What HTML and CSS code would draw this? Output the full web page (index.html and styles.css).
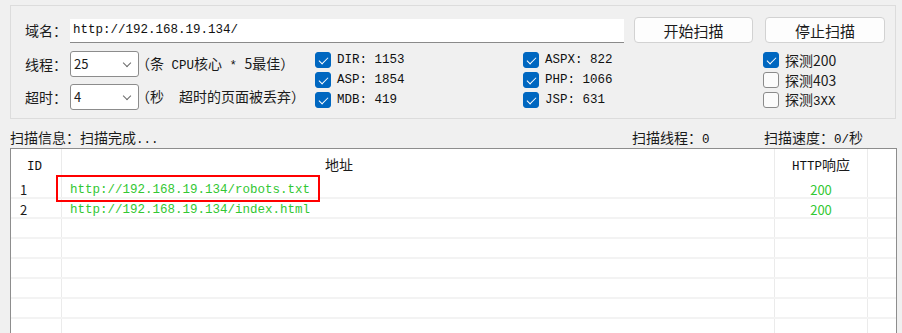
FILE: index.html
```html
<!DOCTYPE html>
<html lang="zh-CN">
<head>
    <meta charset="UTF-8">
    <title>扫描</title>
    <link rel="stylesheet" href="styles.css">
</head>
<body>
    <div class="group">
        <div class="url-row">
            <span class="label">域名：</span>
            <div class="url-input mono">http://192.168.19.134/</div>
            <button class="btn btn-start">开始扫描</button>
            <button class="btn btn-stop">停止扫描</button>
        </div>
        <div class="opts">
            <div class="settings">
                <div class="setting">
                    <span class="label">线程：</span>
                    <div class="select">25<i class="chev"></i></div>
                    <span class="hint">（条<span class="mono"> CPU</span>核心<span class="mono"> * </span>5最佳）</span>
                </div>
                <div class="setting">
                    <span class="label">超时：</span>
                    <div class="select">4<i class="chev"></i></div>
                    <span class="hint">（秒<span class="mono">  </span>超时的页面被丢弃）</span>
                </div>
            </div>
            <div class="checks col1">
                <div class="check"><i class="box on"></i><span class="mono">DIR: 1153</span></div>
                <div class="check"><i class="box on"></i><span class="mono">ASP: 1854</span></div>
                <div class="check"><i class="box on"></i><span class="mono">MDB: 419</span></div>
            </div>
            <div class="checks col2">
                <div class="check"><i class="box on"></i><span class="mono">ASPX: 822</span></div>
                <div class="check"><i class="box on"></i><span class="mono">PHP: 1066</span></div>
                <div class="check"><i class="box on"></i><span class="mono">JSP: 631</span></div>
            </div>
            <div class="checks col3">
                <div class="check"><i class="box on"></i><span>探测200</span></div>
                <div class="check"><i class="box"></i><span>探测403</span></div>
                <div class="check"><i class="box"></i><span>探测<span class="mono">3XX</span></span></div>
            </div>
        </div>
    </div>

    <div class="status">
        <span class="status-info">扫描信息：扫描完成<span class="mono">...</span></span>
        <span class="status-threads">扫描线程：<span class="mono">0</span></span>
        <span class="status-speed">扫描速度：<span class="mono">0/</span>秒</span>
    </div>

    <div class="list">
        <div class="row head">
            <div class="cell c-id"><span class="mono">ID</span></div>
            <div class="cell c-url"><span class="head-url">地址</span></div>
            <div class="cell c-code"><span class="mono">HTTP</span>响应</div>
            <div class="cell c-fill"></div>
        </div>
        <div class="row">
            <div class="cell c-id">1</div>
            <div class="cell c-url mono ok">http://192.168.19.134/robots.txt</div>
            <div class="cell c-code ok">200</div>
            <div class="cell c-fill"></div>
        </div>
        <div class="row">
            <div class="cell c-id">2</div>
            <div class="cell c-url mono ok">http://192.168.19.134/index.html</div>
            <div class="cell c-code ok">200</div>
            <div class="cell c-fill"></div>
        </div>
        <div class="row"><div class="cell c-id"></div><div class="cell c-url"></div><div class="cell c-code"></div><div class="cell c-fill"></div></div>
        <div class="row"><div class="cell c-id"></div><div class="cell c-url"></div><div class="cell c-code"></div><div class="cell c-fill"></div></div>
        <div class="row"><div class="cell c-id"></div><div class="cell c-url"></div><div class="cell c-code"></div><div class="cell c-fill"></div></div>
        <div class="row"><div class="cell c-id"></div><div class="cell c-url"></div><div class="cell c-code"></div><div class="cell c-fill"></div></div>
        <div class="row"><div class="cell c-id"></div><div class="cell c-url"></div><div class="cell c-code"></div><div class="cell c-fill"></div></div>
        <div class="row"><div class="cell c-id"></div><div class="cell c-url"></div><div class="cell c-code"></div><div class="cell c-fill"></div></div>
        <!-- 标注框 -->
        <div class="mark"></div>
    </div>
</body>
</html>
```

FILE: styles.css
```css
*{
    margin:0;
    padding:0;
    box-sizing:border-box;
}
body{
    height:333px;
    overflow:hidden;
    background:#f0f0f0;
    color:#1b1b1b;
    font-family:"Noto Sans CJK SC", "Noto Sans", sans-serif;
    font-size:14px;
    line-height:18px;
}
.mono{
    font-family:"Liberation Mono", "Noto Sans CJK SC", monospace;
    font-size:12.5px;
    color:#111;
    white-space:pre;
}
.group{
    margin:5px 0 0 10px;
    width:886px;
    height:114px;
    border:1px solid #dcdcdc;
    padding:11px 0 0 14px;
}
.url-row{
    display:flex;
    align-items:flex-end;
    height:26px;
}
.label{
    display:inline-block;
    width:45px;
    align-self:center;
}
.url-input{
    width:554px;
    height:24px;
    line-height:22px;
    padding-left:3px;
    background:#fff;
    border-bottom:1px solid #8a8a8a;
}
.btn{
    height:26px;
    font-family:"Noto Sans CJK SC", sans-serif;
    font-size:15px;
    color:#1b1b1b;
    background:#fdfdfd;
    border:1px solid #d2d2d2;
    border-radius:4px;
}
.btn-start{
    margin-left:10px;
    width:119px;
}
.btn-stop{
    margin-left:12px;
    width:120px;
}
.opts{
    display:flex;
    margin-top:8px;
}
.settings{
    width:290px;
    display:flex;
    flex-direction:column;
    gap:7px;
}
.setting{
    display:flex;
    align-items:center;
    height:26px;
}
.select{
    position:relative;
    width:69px;
    height:26px;
    line-height:24px;
    padding-left:3px;
    font-size:13px;
    background:#fff;
    border:1px solid #8c8c8c;
    border-radius:3px;
}
.chev{
    position:absolute;
    right:8px;
    top:8px;
    width:6px;
    height:6px;
    border-right:1px solid #6a6a6a;
    border-bottom:1px solid #6a6a6a;
    transform:rotate(45deg);
}
.hint{
    margin-left:-3px;
    white-space:nowrap;
}
.checks{
    margin-top:-1px;
}
.col1{
    width:208px;
}
.col2{
    width:240px;
}
.check{
    display:flex;
    align-items:center;
    height:20px;
}
.box{
    width:16px;
    height:16px;
    margin-right:6px;
    border:1px solid #8a8a8a;
    border-radius:3px;
    background:#fbfbfb;
    position:relative;
}
.box.on{
    background:#0067c0;
    border-color:#0067c0;
}
.box.on::after{
    content:"";
    position:absolute;
    left:5px;
    top:2px;
    width:4px;
    height:8px;
    border-right:1.3px solid #fff;
    border-bottom:1.3px solid #fff;
    transform:rotate(45deg);
}
.status{
    display:flex;
    margin:9px 0 0 10px;
    height:18px;
    white-space:nowrap;
}
.status-info{
    width:622px;
}
.status-threads{
    width:132px;
}
.list{
    position:relative;
    margin:2px 0 0 10px;
    width:887px;
    height:200px;
    background:#fff;
    border:1px solid #8d8d8d;
}
.row{
    display:flex;
    height:20px;
    border-bottom:2px solid #f3f3f3;
}
.row.head{
    height:30px;
    border-bottom:none;
}
.cell{
    height:100%;
    border-right:1px solid #ebebeb;
    white-space:nowrap;
    font-size:13px;
    line-height:18px;
    padding-top:2px;
}
.cell.mono{
    font-size:12.5px;
}
.head .cell{
    font-size:14px;
    line-height:30px;
    padding-top:0;
}
.c-id{
    width:51px;
    padding-left:9px;
}
.head .c-id{
    padding-left:16px;
}
.c-url{
    width:713px;
    padding-left:8px;
}
.head-url{
    padding-left:255px;
}
.c-code{
    width:93px;
    text-align:center;
}
.c-fill{
    flex:1;
    border-right:none;
}
.cell.ok{
    color:#33c733;
}
.mark{
    position:absolute;
    left:45px;
    top:26px;
    width:264px;
    height:27px;
    border:2px solid #f00;
}
```
